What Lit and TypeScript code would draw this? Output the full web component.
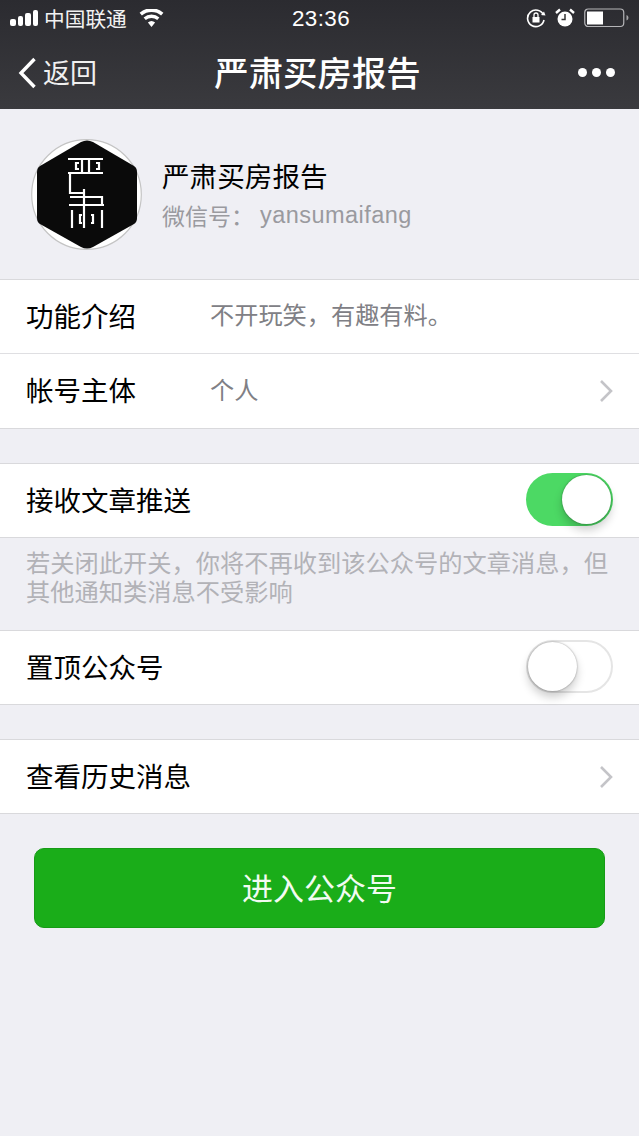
import { LitElement, html, css, svg } from "lit";
import { customElement } from "lit/decorators.js";

const chevron = html`<svg class="chev" width="14" height="24" viewBox="0 0 14 24"><path d="M2 2l10 10L2 22" fill="none" stroke="#c4c4c8" stroke-width="2.6"/></svg>`;

@customElement("app-root")
export class AppRoot extends LitElement {
  static styles = css`
    :host { display: block; width: 639px; height: 1136px; background: #efeff4; overflow: hidden;
      font-family: "Noto Sans CJK SC", "Liberation Sans", sans-serif; color: #000; }
    .head { height: 109px; box-sizing: border-box; background: linear-gradient(#2b2b30, #3a3a3e); color: #fff; display: flex; flex-direction: column; }
    .status { height: 36px; display: flex; align-items: center; padding: 0 9px 0 10px; position: relative; }
    .signal { display: flex; align-items: flex-end; gap: 2px; height: 16px; margin-right: 6px; }
    .signal i { width: 5.5px; background: #fff; border-radius: 2px; display: block; }
    .carrier { font-size: 20.7px; line-height: 33px; margin-right: 12px; color: #f2f2f2; }
    .time { position: absolute; left: 292px; top: 0; line-height: 37px; font-size: 22.4px; font-family: "Liberation Sans", sans-serif; letter-spacing: .4px; }
    .stat-right { margin-left: auto; display: flex; align-items: center; gap: 9px; }
    .nav { flex: 1; display: flex; align-items: center; padding: 0 18px; position: relative; }
    .back { display: flex; align-items: center; gap: 6px; font-size: 27px; color: #f0f0f0; }
    .back span { margin-top: -2px; }
    .title { position: absolute; left: 0; right: 0; text-align: center; font-size: 34.4px; font-weight: 500; line-height: 70px; top: 0; padding-right: 4px; }
    .dots { margin-left: auto; display: flex; gap: 5px; margin-right: 6px; }
    .dots i { width: 9px; height: 9px; border-radius: 50%; background: #fff; display: block; }
    .profile { height: 170px; box-sizing: border-box; display: flex; align-items: center; padding: 0 0 0 31px; gap: 19px; }
    .profile svg { margin-top: 2px; }
    .info { display: flex; flex-direction: column; gap: 5px; margin-top: -4px; }
    .name { font-size: 27.6px; line-height: 40px; }
    .wx { font-size: 23px; line-height: 30px; color: #9a9a9f; display: flex; }
    .wx span { font-family: "Liberation Sans", sans-serif; font-size: 23.5px; letter-spacing: .45px; margin-left: 6px; }
    .group { background: #fff; border-top: 1px solid #d9d9dc; border-bottom: 1px solid #d9d9dc; }
    .row { height: 73px; display: flex; align-items: center; padding: 0 26px; font-size: 27.5px; position: relative; }
    .row + .row { border-top: 1px solid #dfdfe2; height: 74px; }
    .lbl { width: 184px; flex: none; margin-top: -4px; }
    .val { font-size: 24.2px; color: #808085; flex: 1; margin-top: -6px; }
    .chev { position: absolute; right: 26px; top: 25px; }
    .gap { height: 34px; }
    .gap2 { height: 34px; }
    .hint { height: 92px; box-sizing: border-box; padding: 9px 26px 0; font-size: 24.25px; line-height: 29px; color: #b2b2b7; margin-right: -6px; }
    .sw { position: absolute; right: 26px; top: 9px; width: 87px; height: 53px; box-sizing: border-box; border-radius: 27px; }
    .sw.on { background: #4cd964; }
    .sw.off { background: #fff; border: 2px solid #e5e5e5; }
    .knob { position: absolute; width: 49px; height: 49px; border-radius: 50%; background: #fff; box-shadow: 0 6px 10px rgba(0,0,0,.2), 0 0 2px rgba(0,0,0,.4); }
    .on .knob { right: 2px; top: 2px; }
    .off .knob { left: 0; top: 0; }
    .btn { margin: 34px 34px 0; height: 80px; border-radius: 10px; background: #1aad19; border: 1px solid #179b16; box-sizing: border-box; font-size: 31px; display: flex; align-items: center; justify-content: center; color: #f2fbf2; padding-bottom: 4px; }
  `;

  logo() {
    return html`<svg width="112" height="112" viewBox="0 0 112 112">
      <circle cx="55.5" cy="55.5" r="54.8" fill="#fff" stroke="#c4c4c4" stroke-width="1.2"/>
      <path d="M50 3Q56 0 62 3L103 27Q106 29 106 33V79Q106 83 103 85L62 108Q56 111 50 108L9 85Q6 83 6 79V33Q6 29 9 27Z" fill="#0a0a0a"/>
      <g fill="none" stroke="#fff" stroke-width="2.2">
        ${svg`<path d="M37 20H72M51 20V34M58 20V34M37 34H72M48 24H45V30H48M65 24H68V30H65"/>
        <path d="M39 34V54H53M53 50V89M39 58H71V66M38 66H73M41 71V89M71 71V89M51 76H49V84H51M60 76H62V84H60"/>`}
      </g>
    </svg>`;
  }

  render() {
    return html`
      <div class="head">
        <div class="status">
          <div class="signal">
            <i style="height:7px"></i><i style="height:10px"></i><i style="height:13px"></i><i style="height:16px"></i>
          </div>
          <span class="carrier">中国联通</span>
          <svg width="25" height="18" viewBox="0 0 25 18"><path d="M12.5 18l-3.6-4.5a5.6 5.6 0 0 1 7.2 0zM6.8 11 4.6 8.4a12 12 0 0 1 15.8 0L18.2 11a8.8 8.8 0 0 0-11.4 0zM2.9 6.4.6 3.7a18.2 18.2 0 0 1 23.8 0l-2.3 2.7a15 15 0 0 0-19.2 0z" fill="#fff"/></svg>
          <span class="time">23:36</span>
          <div class="stat-right">
            <svg width="20" height="20" viewBox="0 0 20 20" fill="none" stroke="#fff" stroke-width="1.6"><path d="M17.5 7A8.3 8.3 0 1 0 18 12"/><path d="M15 7l4.5.6L18 3.5" stroke="none" fill="#fff"/><rect x="6.5" y="9" width="7" height="5.5" fill="#fff" stroke="none"/><path d="M8 9V7a2 2 0 0 1 4 0v2" stroke-width="1.3"/></svg>
            <svg width="20" height="20" viewBox="0 0 20 20"><circle cx="10" cy="11" r="7.5" fill="#fff"/><path d="M10 6v5.5H6.5" fill="none" stroke="#333" stroke-width="1.5"/><path d="M1 5l4-3.5M19 5l-4-3.5" stroke="#fff" stroke-width="2.4"/></svg>
            <svg width="46" height="20" viewBox="0 0 46 20"><rect x=".75" y="1" width="39" height="17.5" rx="3.5" fill="none" stroke="#b5b5b8" stroke-width="1.2"/><rect x="3" y="3.5" width="16" height="13" fill="#fff"/><path d="M42.5 7v5.5a3 3 0 0 0 2-2.7 3 3 0 0 0-2-2.8z" fill="#a5a5a8"/></svg>
          </div>
        </div>
        <div class="nav">
          <div class="back">
            <svg width="19" height="32" viewBox="0 0 19 32"><path d="M16.5 2 3 16l13.5 14" fill="none" stroke="#fff" stroke-width="3.4"/></svg>
            <span>返回</span>
          </div>
          <div class="title">严肃买房报告</div>
          <div class="dots"><i></i><i></i><i></i></div>
        </div>
      </div>

      <div class="profile">
        ${this.logo()}
        <div class="info">
          <div class="name">严肃买房报告</div>
          <div class="wx">微信号：<span>yansumaifang</span></div>
        </div>
      </div>

      <div class="group">
        <div class="row"><span class="lbl">功能介绍</span><span class="val">不开玩笑，有趣有料。</span></div>
        <div class="row"><span class="lbl">帐号主体</span><span class="val">个人</span>${chevron}</div>
      </div>
      <div class="gap"></div>
      <div class="group">
        <div class="row"><span class="lbl">接收文章推送</span><div class="sw on"><div class="knob"></div></div></div>
      </div>
      <div class="hint">若关闭此开关，你将不再收到该公众号的文章消息，但其他通知类消息不受影响</div>
      <div class="group">
        <div class="row"><span class="lbl">置顶公众号</span><div class="sw off"><div class="knob"></div></div></div>
      </div>
      <div class="gap2"></div>
      <div class="group">
        <div class="row"><span class="lbl">查看历史消息</span>${chevron}</div>
      </div>
      <div class="btn">进入公众号</div>
    `;
  }
}
